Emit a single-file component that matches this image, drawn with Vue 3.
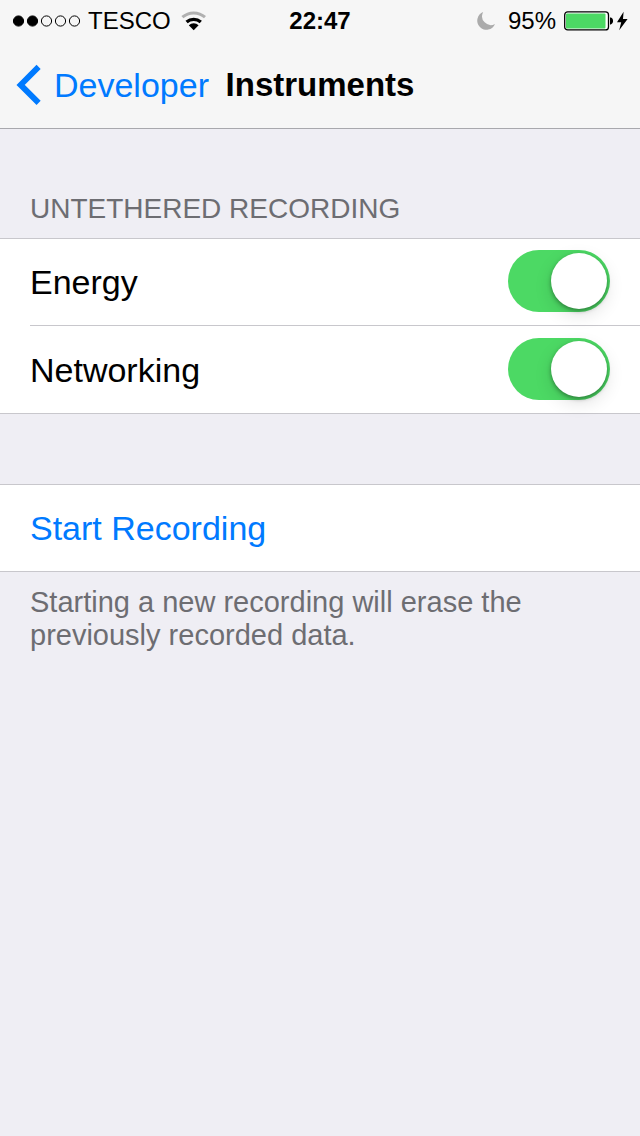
<script setup>
import { ref } from 'vue'

const signalBars = 5
const signalLevel = 2
const recorders = ref([
  { id: 'energy', label: 'Energy', enabled: true },
  { id: 'networking', label: 'Networking', enabled: true },
])
</script>

<template>
  <div class="screen">
    <header class="header">
      <div class="status">
        <div class="status-left">
          <svg class="signal" width="68" height="12" viewBox="0 0 68 12" aria-hidden="true">
            <circle
              v-for="n in signalBars"
              :key="n"
              :cx="n * 14 - 7.5"
              cy="6"
              r="5.1"
              :class="{ filled: n <= signalLevel }"
            />
          </svg>
          <span class="carrier">TESCO</span>
          <svg class="wifi" width="26" height="20" viewBox="0 0 26 20" aria-hidden="true">
            <path d="M1.4 6.2a17 17 0 0 1 22.6 0" fill="none" stroke="#b0b0b0" stroke-width="3" />
            <path d="M5.6 11a11 11 0 0 1 14.2 0" fill="none" stroke="#000" stroke-width="3.4" />
            <path d="M12.7 19.2l-4.9-5a7.4 7.4 0 0 1 9.8 0z" fill="#000" />
          </svg>
        </div>
        <time class="clock">22:47</time>
        <div class="status-right">
          <svg class="moon" width="20" height="20" viewBox="0 0 20 20" aria-hidden="true">
            <path d="M7.2 1A9.2 9.2 0 1 0 19 13A8.8 8.8 0 0 1 7.2 1z" fill="#ababab" />
          </svg>
          <span class="percent">95%</span>
          <svg class="battery" width="50" height="20" viewBox="0 0 50 20" aria-hidden="true">
            <rect x="0.7" y="0.9" width="43.8" height="18" rx="3" fill="#fff" stroke="#000" stroke-width="1.3" />
            <rect x="2" y="2.4" width="39.5" height="15" rx="1" fill="#4cd964" />
            <path d="M46 6.6h0.8c3 0.8 3 6 0 6.8h-0.8z" fill="#000" />
          </svg>
          <svg class="bolt" width="12" height="20" viewBox="0 0 12 20" aria-hidden="true">
            <path d="M7.6 0.8L1 11.2h4.2L3.2 19.2L11.6 8H7z" fill="#000" />
          </svg>
        </div>
      </div>
      <nav class="nav">
        <a class="back" href="#developer">
          <svg width="26" height="42" viewBox="0 0 26 42" aria-hidden="true">
            <path d="M22.6 2.9L4.6 20.9L22.6 38.9" fill="none" stroke="#007aff" stroke-width="5.8" />
          </svg>
          <span>Developer</span>
        </a>
        <h1 class="title">Instruments</h1>
      </nav>
    </header>

    <main>
      <h2 class="section-title">UNTETHERED RECORDING</h2>
      <div class="group">
        <div v-for="item in recorders" :key="item.id" class="row">
          <label :for="item.id">{{ item.label }}</label>
          <input :id="item.id" v-model="item.enabled" class="switch" type="checkbox" role="switch" />
        </div>
      </div>

      <div class="group action-group">
        <button class="action" type="button">Start Recording</button>
      </div>
      <p class="note">Starting a new recording will erase the previously recorded data.</p>
    </main>
  </div>
</template>

<style>
body {
  background: #efeef4;
}
</style>

<style scoped>
.screen {
  min-height: 100vh;
  background: #efeef4;
  color: #000;
  font-family: "Liberation Sans", Arial, sans-serif;
  font-size: 34px;
}

.header {
  background: #f6f6f6;
  border-bottom: 1px solid #a8a8ad;
}

.status {
  display: grid;
  grid-template-columns: 1fr auto 1fr;
  align-items: center;
  height: 42px;
  padding: 0 12px;
  font-size: 24px;
  line-height: 42px;
}

.status-left,
.status-right {
  display: flex;
  align-items: center;
}

.status-right {
  justify-content: flex-end;
}

.signal circle {
  fill: none;
  stroke: #000;
  stroke-width: 1;
}

.signal .filled {
  fill: #000;
}

.carrier {
  margin: 0 10px 0 8px;
}

.clock {
  font-weight: 700;
}

.percent {
  margin: 0 8px 0 12px;
}

.bolt {
  margin-left: 2px;
}

.nav {
  display: grid;
  grid-template-columns: 1fr auto 1fr;
  align-items: center;
  height: 86px;
}

.back {
  display: flex;
  align-items: center;
  gap: 12px;
  padding-left: 16px;
  color: #007aff;
  text-decoration: none;
}

.title {
  margin: 0;
  font-size: 33px;
  font-weight: 700;
}

.section-title {
  margin: 0;
  padding: 64px 30px 14px;
  color: #6d6d72;
  font-size: 28px;
  font-weight: 400;
  line-height: 32px;
}

.group {
  margin-top: -1px;
  background: #fff;
  box-shadow: inset 0 1px #c8c7cc, inset 0 -1px #c8c7cc;
}

.row {
  display: flex;
  align-items: center;
  justify-content: space-between;
  height: 88px;
  margin-left: 30px;
  padding-right: 30px;
  box-sizing: border-box;
  box-shadow: inset 0 -1px #c8c7cc;
}

.switch {
  appearance: none;
  display: flex;
  align-self: flex-start;
  box-sizing: border-box;
  width: 102px;
  height: 62px;
  margin: 12px 0 0;
  padding: 3px;
  border-radius: 31px;
  background: #e5e5ea;
}

.switch::before {
  content: "";
  width: 56px;
  height: 56px;
  border-radius: 50%;
  background: #fff;
  box-shadow: 0 2px 4px rgba(0, 0, 0, 0.35), 0 6px 18px rgba(0, 0, 0, 0.12);
}

.switch:checked {
  justify-content: flex-end;
  background: #4cd964;
}

.action-group {
  margin-top: 70px;
}

.action {
  display: block;
  width: 100%;
  height: 88px;
  padding: 0 30px;
  border: 0;
  background: none;
  color: #007aff;
  font: inherit;
  text-align: left;
}

.note {
  max-width: 520px;
  margin: 0;
  padding: 14px 30px;
  color: #6d6d72;
  font-size: 29px;
  line-height: 33px;
}
</style>
